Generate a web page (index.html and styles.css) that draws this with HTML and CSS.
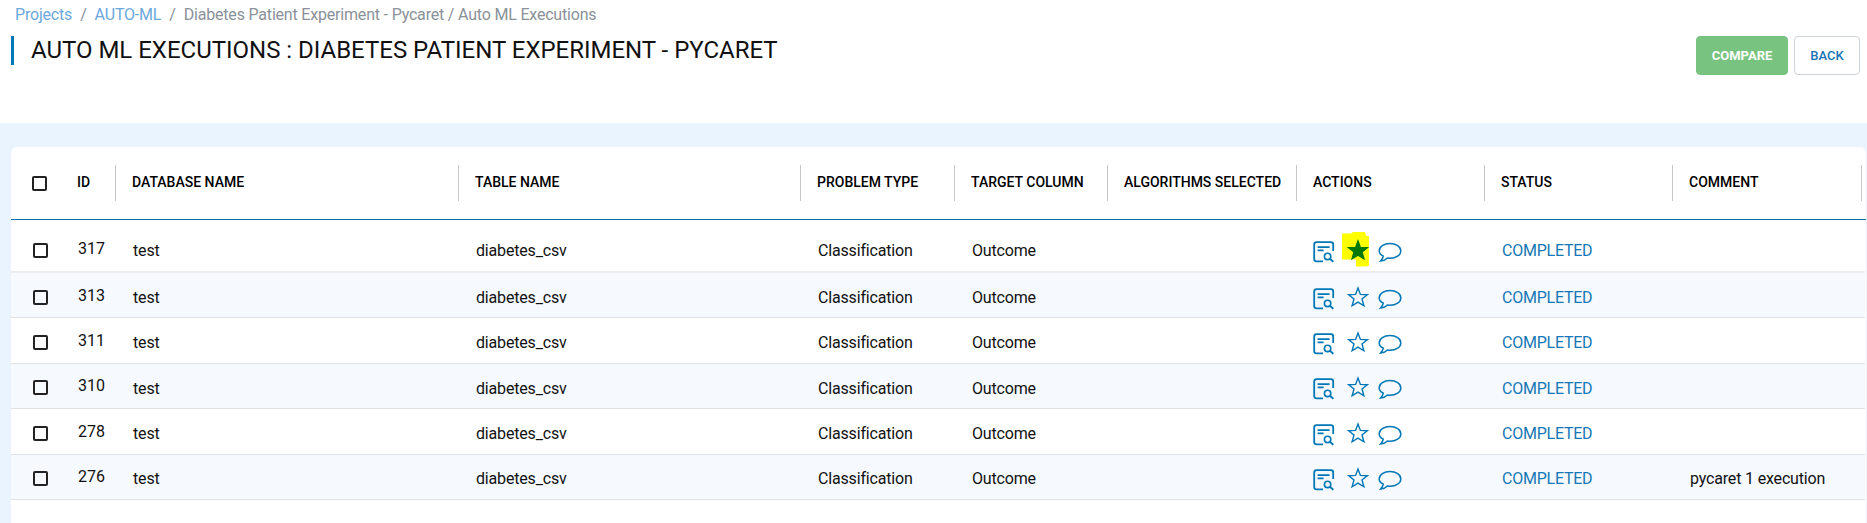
FILE: index.html
```html
<!DOCTYPE html>
<html lang="en">
<head>
<meta charset="utf-8">
<title>Auto ML Executions</title>
<link rel="stylesheet" href="styles.css">
</head>
<body>
<svg width="0" height="0" class="sprite">
  <symbol id="report" viewBox="0 0 22 22"><g fill="none" stroke="currentColor" stroke-width="1.8"><path d="M20.2 10V3.6Q20.2 1.2 18 1.2H3.6Q1.2 1.2 1.2 3.6V18Q1.2 20.4 3.6 20.4H10"/><path d="M4.6 6.2H16.6M4.6 9.4H10.6"/><circle cx="14.6" cy="15.4" r="3.2" stroke-width="1.6"/><path d="M16.8 17.8L20.4 20.8"/></g></symbol>
  <symbol id="star" viewBox="0 0 22 22"><path d="M11 2L13.4 8.4L20.3 8.7L15 12.9L16.9 19.8L11 16.1L5.1 19.8L7 12.9L1.7 8.7L8.6 8.4Z" stroke="currentColor" stroke-width="1.4"/></symbol>
  <symbol id="chat" viewBox="0 0 24 22"><path d="M5.3 14.2C2.8 12.8 1.2 10.8 1.2 8.9C1.2 4.7 6 1.6 12 1.6S22.8 4.7 22.8 8.9S18 16.2 12 16.2C11.1 16.2 10.3 16.1 9.5 16C7.7 17.8 5.4 18.8 2.6 19C4.1 17.5 5 15.9 5.3 14.2Z" fill="none" stroke="currentColor" stroke-width="1.5"/></symbol>
</svg>
<header class="top">
  <nav class="crumbs"><a>Projects</a><span class="sep">/</span><a>AUTO-ML</a><span class="sep">/</span><span class="here">Diabetes Patient Experiment - Pycaret / Auto ML Executions</span></nav>
  <div class="heading">
    <h1>AUTO ML EXECUTIONS : DIABETES PATIENT EXPERIMENT - PYCARET</h1>
    <div class="buttons"><button class="btn compare">COMPARE</button><button class="btn back">BACK</button></div>
  </div>
</header>
<main class="card">
  <div class="grid head">
    <div class="check"><i class="box"></i></div><div class="th id">ID</div><div class="th">DATABASE NAME</div><div class="th">TABLE NAME</div><div class="th">PROBLEM TYPE</div><div class="th">TARGET COLUMN</div><div class="th">ALGORITHMS SELECTED</div><div class="th">ACTIONS</div><div class="th">STATUS</div><div class="th">COMMENT</div>
  </div>
  <div class="grid row first"><div class="check"><i class="box"></i></div><div class="id">317</div><div>test</div><div>diabetes_csv</div><div>Classification</div><div>Outcome</div><div></div><div class="actions"><svg class="report"><use href="#report"/></svg><span class="marked"><svg class="star on"><use href="#star"/></svg></span><svg class="chat"><use href="#chat"/></svg></div><div class="status">COMPLETED</div><div></div></div>
  <div class="grid row"><div class="check"><i class="box"></i></div><div class="id">313</div><div>test</div><div>diabetes_csv</div><div>Classification</div><div>Outcome</div><div></div><div class="actions"><svg class="report"><use href="#report"/></svg><svg class="star"><use href="#star"/></svg><svg class="chat"><use href="#chat"/></svg></div><div class="status">COMPLETED</div><div></div></div>
  <div class="grid row"><div class="check"><i class="box"></i></div><div class="id">311</div><div>test</div><div>diabetes_csv</div><div>Classification</div><div>Outcome</div><div></div><div class="actions"><svg class="report"><use href="#report"/></svg><svg class="star"><use href="#star"/></svg><svg class="chat"><use href="#chat"/></svg></div><div class="status">COMPLETED</div><div></div></div>
  <div class="grid row"><div class="check"><i class="box"></i></div><div class="id">310</div><div>test</div><div>diabetes_csv</div><div>Classification</div><div>Outcome</div><div></div><div class="actions"><svg class="report"><use href="#report"/></svg><svg class="star"><use href="#star"/></svg><svg class="chat"><use href="#chat"/></svg></div><div class="status">COMPLETED</div><div></div></div>
  <div class="grid row"><div class="check"><i class="box"></i></div><div class="id">278</div><div>test</div><div>diabetes_csv</div><div>Classification</div><div>Outcome</div><div></div><div class="actions"><svg class="report"><use href="#report"/></svg><svg class="star"><use href="#star"/></svg><svg class="chat"><use href="#chat"/></svg></div><div class="status">COMPLETED</div><div></div></div>
  <div class="grid row"><div class="check"><i class="box"></i></div><div class="id">276</div><div>test</div><div>diabetes_csv</div><div>Classification</div><div>Outcome</div><div></div><div class="actions"><svg class="report"><use href="#report"/></svg><svg class="star"><use href="#star"/></svg><svg class="chat"><use href="#chat"/></svg></div><div class="status">COMPLETED</div><div>pycaret 1 execution</div></div>
</main>
</body>
</html>
```
FILE: styles.css
```css
* { box-sizing: border-box; }
body { margin: 0; height: 523px; overflow: hidden; background: #e9f4ff; font: 400 16px/20px Roboto, sans-serif; color: #111; display: flex; flex-direction: column; }
.sprite { display: none; }
.top { height: 123px; flex: none; background: #fff; padding: 5px 7px 0 11px; }
.crumbs { display: flex; padding-left: 4px; color: #8a9199; white-space: nowrap; letter-spacing: -0.19px; }
.crumbs a { color: #6ca8dc; }
.sep { margin: 0 8px; }
.heading { display: flex; justify-content: space-between; padding-top: 11px; }
h1 { margin: 0; height: 29px; border-left: 3px solid #0077b6; padding-left: 17px; font-size: 24px; line-height: 28px; font-weight: 400; letter-spacing: -0.01px; white-space: nowrap; }
.buttons { display: flex; gap: 6px; }
.btn { height: 39px; border: 1px solid #ced4da; border-radius: 4px; background: #fff; color: #1674b5; font: 500 13px Roboto, sans-serif; padding: 0; width: 66px; }
.btn.compare { width: 92px; background: #79c381; border-color: #79c381; color: #fff; font-weight: 700; }
.card { flex: 1; margin: 24px 1px 0 11px; background: #fff; border-radius: 6px 6px 0 0; }
.grid { display: grid; grid-template-columns: 50px 55px 343px 342px 154px 153px 189px 188px 188px 193px; }
.head { height: 73px; border-bottom: 1px solid #0d6fa8; padding-top: 18px; font-weight: 500; font-size: 14px; line-height: 35px; color: #000; }
.th { height: 36px; border-right: 1px solid #c8c8c8; padding-left: 16px; white-space: nowrap; }
.th:last-child { width: 189px; }
.check { padding: 16.5px 0 0 21px; }
.head .check { padding: 11px 0 0 21px; }
.box { display: block; width: 15px; height: 15px; border: 2px solid #222; border-radius: 2px; }
.row .box { margin-left: 1px; }
.row { height: 45.4px; margin-right: 1px; border-bottom: 1px solid #dfe2e6; letter-spacing: -0.17px; }
.row:nth-child(odd) { background: #f6faff; }
.row > div:not(.check) { padding: 14.8px 0 0 17px; white-space: nowrap; }
.row > div.id { padding-top: 12.5px; letter-spacing: 0; }
.row.first { height: 53px; padding-top: 6px; border-bottom: 2px solid #ececec; }
.row.first .check { padding-top: 17px; }
.row > .status { color: #1577b5; letter-spacing: -0.24px; }
.row > .actions { display: flex; padding: 13.6px 0 0 16px !important; color: #0077b6; }
svg { flex: none; overflow: visible; }
.report { width: 22px; height: 22px; margin-top: 1px; }
.star { width: 22px; height: 22px; margin: -1px 0 0 11.5px; fill: none; }
.chat { width: 24px; height: 22px; margin: 2px 0 0 9.5px; }
.marked { position: relative; z-index: 0; height: 22px; }
.marked .star { display: block; }
.marked::before { content: ""; position: absolute; z-index: -1; left: 7px; top: -8px; width: 27px; height: 35px; background: #ff0; clip-path: polygon(0 2px, 9px 2px, 12px 0, 23px 0, 24px 4px, 27px 5px, 27px 34px, 24px 35px, 14px 35px, 14px 28px, 0 28px); }
.star.on { color: #007800; fill: #007800; }
```
